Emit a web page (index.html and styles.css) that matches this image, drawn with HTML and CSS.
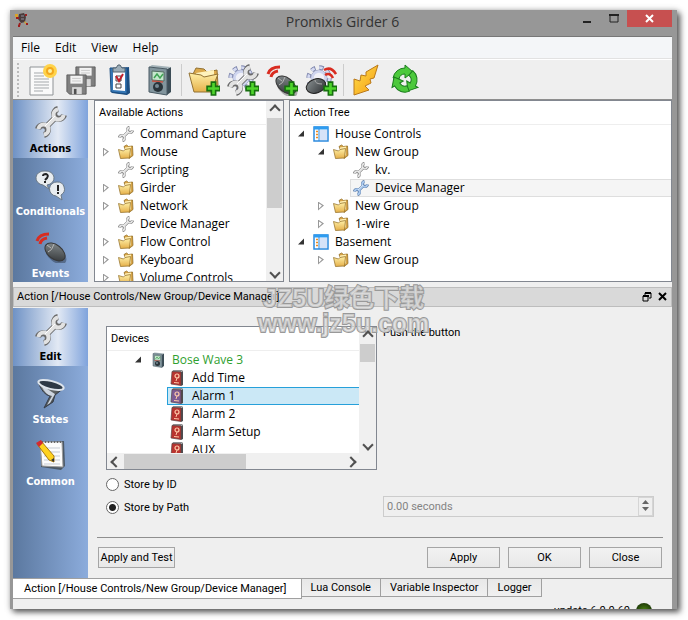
FILE: index.html
```html
<!DOCTYPE html>
<html lang="en">

<head>
    <meta charset="UTF-8">
    <meta name="viewport" content="width=device-width, initial-scale=1.0">
    <title>Promixis Girder 6</title>
    <link rel="stylesheet" href="styles.css">
</head>

<body>

    <!-- Icon sprites -->
    <svg class="sprites" aria-hidden="true">
        <linearGradient id="g-metal" x1="0" y1="0" x2="1" y2="1">
            <stop offset="0" stop-color="#8b9294"/><stop offset="1" stop-color="#2d3032"/>
        </linearGradient>
        <linearGradient id="g-folder" x1="0" y1="0" x2="0" y2="1">
            <stop offset="0" stop-color="#fff0a8"/><stop offset="1" stop-color="#e5b04a"/>
        </linearGradient>
        <linearGradient id="g-bolt" x1="0" y1="0" x2="1" y2="1">
            <stop offset="0" stop-color="#ffe14a"/><stop offset="1" stop-color="#f59a14"/>
        </linearGradient>
        <radialGradient id="g-led">
            <stop offset="0" stop-color="#4f8a14"/><stop offset="1" stop-color="#1f3c08"/>
        </radialGradient>
        <symbol id="wrench" viewBox="0 0 32 32">
            <g class="metal-edge" fill="none" stroke-width="6">
                <path d="M21 11 11 21"/>
                <path d="M23 3A5 5 0 1 0 29 9M3 23A5 5 0 1 1 9 29"/>
            </g>
            <g class="metal" fill="none" stroke-width="4">
                <path d="M21 11 11 21"/>
                <path d="M23 3.500A5 5 0 1 0 28.500 9M3.500 23A5 5 0 1 1 9 28.500"/>
            </g>
            <path d="M20 10 10 20" stroke="#fff" stroke-width="1"/>
        </symbol>
        <symbol id="folder" viewBox="0 0 32 32">
            <path d="M12 5 17 2l4 3 8-1 1 19-8 6z" fill="#d9a548" stroke="#8f6a1e" stroke-width="1.500"/>
            <path d="M14 7l12-2v18H14z" fill="#ffeeb0"/>
            <path d="M1 11l10 3 3-3 11-2-2 19-18 1z" fill="url(#g-folder)" stroke="#94702a" stroke-width="1.500"/>
        </symbol>
        <symbol id="open-folder" viewBox="0 0 32 32">
            <path d="M5 10l3-6 8 1 3 3 10-2 1 15-8 7z" fill="#dba94c" stroke="#927234"/>
            <path d="M8 9l18-3v17H9z" fill="#fff3bd"/>
            <path d="M1 9l12 2 3 2 14-3-7 18H6z" fill="url(#g-folder)" stroke="#927234"/>
        </symbol>
        <symbol id="plus" viewBox="0 0 14 14">
            <path d="M5 1h4v4h4v4H9v4H5V9H1V5h4z" fill="#4fd42c" stroke="#17700f" stroke-width="1.500"/>
        </symbol>
        <symbol id="table" viewBox="0 0 16 16">
            <rect x="1" y="1" width="14" height="14" fill="#fff" stroke="#2c8ade" stroke-width="1.500"/>
            <path d="M1 2h14" stroke="#2e9cf0" stroke-width="3"/>
            <path d="M6 3v12" stroke="#2c8ade"/>
            <rect x="7" y="4" width="7" height="10" fill="#d7e3f8"/>
            <path d="M3 5.500h2M3 8.500h2M3 11.500h2" stroke="#f08a1c" stroke-width="1.500"/>
        </symbol>
        <symbol id="mouse" viewBox="0 0 32 32">
            <ellipse cx="21" cy="24" rx="12" ry="7" transform="rotate(38 21 24)" fill="#000" opacity=".3"/>
            <ellipse cx="20" cy="21" rx="11.500" ry="7" transform="rotate(38 20 21)" fill="url(#g-metal)" stroke="#383838"/>
            <path d="M13 21q4-1 6-8M12 14l4 3" fill="none" stroke="#b8b8b8"/>
            <path d="M2 10Q4 3 14 3M5 13Q6 8 12 7" fill="none" stroke="#d92c20" stroke-width="3"/>
        </symbol>
        <symbol id="gear" viewBox="0 0 32 32">
            <circle cx="16" cy="16" r="12" fill="none" stroke="#7d85ac" stroke-width="5" stroke-dasharray="5 4.400"/>
            <circle cx="16" cy="16" r="12" fill="none" stroke="#d5daf2" stroke-width="3" stroke-dasharray="4 5.400"/>
            <circle cx="16" cy="16" r="9" fill="#f1f1f8" stroke="#858db4" stroke-width="1"/>
            <circle cx="16" cy="16" r="7.500" fill="none" stroke="#cfd5ef" stroke-width="3"/>
        </symbol>
        <symbol id="device" viewBox="0 0 32 32">
            <path d="M24 5l4-2v25l-4 3z" fill="#3c4d56"/>
            <path d="M6 3 9 1l19 2-4 2z" fill="#a3b2b8"/>
            <path d="M6 3l18 2v26L6 28z" fill="#82959d" stroke="#4a5b64"/>
            <path d="M9 7l12 1v9L9 16z" fill="#c5e8cd" stroke="#526d60"/>
            <path d="M11 14l3-4 3 4 3-4" fill="none" stroke="#3fa353" stroke-width="1.500"/>
            <path d="M9 17l11 1" stroke="#c45445" stroke-width="1.500"/>
            <circle cx="15" cy="23" r="5" fill="#29343a"/>
            <circle cx="14" cy="22" r="2" fill="#778b94"/>
        </symbol>
        <symbol id="command" viewBox="0 0 16 16">
            <path d="M11 2l2-1v14l-2 1z" fill="#4d4d50"/>
            <path d="M3 0h10l-2 2H2z" fill="#8d8d90"/>
            <path class="face" d="M2 1.500l9 .5v13.500L1 14z" stroke="#5c4040" stroke-width=".7"/>
            <circle cx="7" cy="6" r="2" fill="none" stroke="#ffc9a8" stroke-width="1.200"/>
            <path d="M7 8l-1 3M4 12.500l5 .5" fill="none" stroke="#ffc9a8"/>
        </symbol>
        <symbol id="floppy" viewBox="0 0 24 24">
            <path d="M1 1h22v22H4l-3-3z" fill="#808080" stroke="#5a5a5a"/>
            <path d="M5 2h14v9H5z" fill="#f2f2f2"/>
            <path d="M7 5h10M7 8h10" stroke="#c4c4c4"/>
            <path d="M7 15h11v8H7z" fill="#d8d8d8"/>
            <path d="M9 17h3v6H9z" fill="#505050"/>
        </symbol>
        <symbol id="cycle-arrow" viewBox="0 0 32 32">
            <path d="M4 14A12 12 0 0 1 16 4V1l8 7-8 6v-4a6 6 0 0 0-6 5z" fill="#4cc93c" stroke="#1b7d1d"/>
        </symbol>
    </svg>

    <div class="window">

        <div class="titlebar">
            <svg class="app-icon" viewBox="0 0 16 16" aria-hidden="true">
                <path d="M5 2l5-1 2 4-1 5-4 1-3-4z" fill="#4a3c3c"/>
                <path d="M1 2h3v3H1zM10 9l3 2-2 1z" fill="#d9a32c"/>
                <path d="M2 6h3M11 3h2M6 11l-1 3M4 14h2M12 12h2" stroke="#9c1e1e" stroke-width="2"/>
                <path d="M7 4h3M7 7h3" stroke="#8e8e9c"/>
            </svg>
            <span class="title">Promixis Girder 6</span>
            <div class="window-buttons">
                <button class="win-btn" aria-label="Minimize"><svg width="10" height="10"><path d="M1 8h8" stroke="#222" stroke-width="2"/></svg></button>
                <button class="win-btn" aria-label="Maximize"><svg width="10" height="10"><path d="M1 1h8v7H1z" fill="none" stroke="#222"/><path d="M0 1h10" stroke="#222" stroke-width="2"/></svg></button>
                <button class="win-btn win-close" aria-label="Close window"><svg width="10" height="10"><path d="M1 1l7 7M8 1 1 8" stroke="#fff" stroke-width="2"/></svg></button>
            </div>
        </div>

        <div class="client">

            <div class="menubar">
                <button>File</button>
                <button>Edit</button>
                <button>View</button>
                <button>Help</button>
            </div>

            <div class="toolbar">
                <span class="grip"></span>
                <button class="tool" aria-label="New">
                    <svg viewBox="0 0 32 32">
                        <path d="M4 3h23v28H4z" fill="#fafafa" stroke="#8f9396"/>
                        <path d="M8 9h10M8 12h10M8 15h15M8 18h15M8 21h15M8 24h15M8 27h9" stroke="#a5a9ac"/>
                        <circle cx="24" cy="7" r="7" fill="#ffd34a"/>
                        <circle cx="24" cy="7" r="3" fill="#fff2a0" stroke="#f3a81c" stroke-width="2"/>
                    </svg>
                </button>
                <button class="tool" aria-label="Save all">
                    <svg viewBox="0 0 32 32">
                        <use href="#floppy" x="10" y="2" width="21" height="21"/>
                        <use href="#floppy" x="1" y="10" width="21" height="21"/>
                    </svg>
                </button>
                <button class="tool" aria-label="Tasks">
                    <svg viewBox="0 0 32 32">
                        <path d="M8 5l17-2 1 26-3 2-15-2z" fill="#1d4f82"/>
                        <path d="M6 4h17v26L7 28z" fill="#3577b5" stroke="#1d4f82"/>
                        <path d="M9 7h12v20l-12-1z" fill="#fcfcff"/>
                        <path d="M9 4h3l2-3h2l2 3h3v4H9z" fill="#9cadb8" stroke="#53636e"/>
                        <path d="M12 12h5v5h-5zM12 20h5v4h-5z" fill="none" stroke="#444"/>
                        <path d="M12 12l3 5 4-7" fill="none" stroke="#c3202c" stroke-width="2"/>
                    </svg>
                </button>
                <button class="tool" aria-label="Devices"><svg viewBox="0 0 32 32"><use href="#device"/></svg></button>
                <span class="divider"></span>
                <button class="tool" aria-label="Add group">
                    <svg viewBox="0 0 32 32"><use href="#open-folder"/><use href="#plus" x="18" y="17" width="15" height="15"/></svg>
                </button>
                <button class="tool" aria-label="Add action">
                    <svg viewBox="0 0 32 32"><use href="#gear" width="28" height="28"/><use href="#wrench"/><use href="#plus" x="18" y="17" width="15" height="15"/></svg>
                </button>
                <button class="tool" aria-label="Add event">
                    <svg viewBox="0 0 32 32"><use href="#mouse"/><use href="#plus" x="18" y="17" width="15" height="15"/></svg>
                </button>
                <button class="tool" aria-label="Add conditional">
                    <svg viewBox="0 0 32 32">
                        <use href="#gear" width="28" height="28"/>
                        <path d="M19 6q7-4 12 4M20 11q5-3 8 3" fill="none" stroke="#d92c20" stroke-width="2.500"/>
                        <ellipse cx="11" cy="22" rx="10" ry="7" transform="rotate(-20 11 22)" fill="url(#g-metal)" stroke="#222"/>
                        <path d="M10 16q0 4 7 4" fill="none" stroke="#aaa"/>
                        <use href="#plus" x="18" y="17" width="15" height="15"/>
                    </svg>
                </button>
                <span class="divider"></span>
                <button class="tool" aria-label="Run">
                    <svg viewBox="0 0 32 32"><path d="M28 1 16 8v4l-5-1-1 6-6-2v16l15-5-4-4 6-3-1-4 4-1z" fill="url(#g-bolt)" stroke="#b9791a"/></svg>
                </button>
                <button class="tool" aria-label="Reload">
                    <svg viewBox="0 0 32 32">
                        <use href="#cycle-arrow" width="32" height="32"/>
                        <use href="#cycle-arrow" width="32" height="32" transform="rotate(120 16 16)"/>
                        <use href="#cycle-arrow" width="32" height="32" transform="rotate(240 16 16)"/>
                    </svg>
                </button>
            </div>

            <div class="upper">
                <div class="sidebar">
                    <button class="side-item active"><svg viewBox="0 0 32 32"><use href="#wrench"/></svg>Actions</button>
                    <button class="side-item">
                        <svg viewBox="0 0 32 32">
                            <path d="M10 2a8 7 0 1 1 2 14l2 4-6-4A8 7 0 0 1 10 2z" fill="#e8ecef" stroke="#6b7986"/>
                            <path d="M22 13a7 7 0 0 1 4 13l1 5-6-4a7 7 0 0 1 1-14z" fill="#e8ecef" stroke="#6b7986"/>
                            <path d="M8 7q0-2 3-2 3 1 1 4l-2 2M10 12v2M23 16v6M23 23v2" fill="none" stroke="#222" stroke-width="2"/>
                        </svg>
                        Conditionals
                    </button>
                    <button class="side-item"><svg viewBox="0 0 32 32"><use href="#mouse"/></svg>Events</button>
                </div>

                <div class="panel available">
                    <div class="panel-main">
                        <h2 class="panel-header">Available Actions</h2>
                        <ul class="tree">
                            <li><span class="twisty none"></span><svg class="icon"><use href="#wrench"/></svg>Command Capture</li>
                            <li><span class="twisty"></span><svg class="icon"><use href="#folder"/></svg>Mouse</li>
                            <li><span class="twisty none"></span><svg class="icon"><use href="#wrench"/></svg>Scripting</li>
                            <li><span class="twisty"></span><svg class="icon"><use href="#folder"/></svg>Girder</li>
                            <li><span class="twisty"></span><svg class="icon"><use href="#folder"/></svg>Network</li>
                            <li><span class="twisty none"></span><svg class="icon"><use href="#wrench"/></svg>Device Manager</li>
                            <li><span class="twisty"></span><svg class="icon"><use href="#folder"/></svg>Flow Control</li>
                            <li><span class="twisty"></span><svg class="icon"><use href="#folder"/></svg>Keyboard</li>
                            <li><span class="twisty"></span><svg class="icon"><use href="#folder"/></svg>Volume Controls</li>
                        </ul>
                    </div>
                    <div class="scroll-v">
                        <button class="arrow up" aria-label="Scroll up"></button>
                        <span class="thumb"></span>
                        <button class="arrow down" aria-label="Scroll down"></button>
                    </div>
                </div>

                <div class="panel action-tree">
                    <div class="panel-main">
                        <h2 class="panel-header">Action Tree</h2>
                        <ul class="tree">
                            <li><span class="twisty open"></span><svg class="icon"><use href="#table"/></svg>House Controls</li>
                            <li class="level-1"><span class="twisty open"></span><svg class="icon"><use href="#folder"/></svg>New Group</li>
                            <li class="level-2"><svg class="icon"><use href="#wrench"/></svg>kv.</li>
                            <li class="level-2 current"><svg class="icon"><use href="#wrench"/></svg>Device Manager</li>
                            <li class="level-1"><span class="twisty"></span><svg class="icon"><use href="#folder"/></svg>New Group</li>
                            <li class="level-1"><span class="twisty"></span><svg class="icon"><use href="#folder"/></svg>1-wire</li>
                            <li><span class="twisty open"></span><svg class="icon"><use href="#table"/></svg>Basement</li>
                            <li class="level-1"><span class="twisty"></span><svg class="icon"><use href="#folder"/></svg>New Group</li>
                        </ul>
                    </div>
                </div>
            </div>

            <div class="dock-title">
                <span>Action [/House Controls/New Group/Device Manager]</span>
                <button aria-label="Float"><svg width="10" height="10"><path d="M3 3V1h6v5H7M1 4h5v5H1z" fill="none" stroke="#000"/><path d="M3 1h6M1 4h6" stroke="#000" stroke-width="2"/></svg></button>
                <button aria-label="Close panel"><svg width="10" height="10"><path d="M1 1l7 7M8 1 1 8" stroke="#000" stroke-width="2"/></svg></button>
                <div class="watermark">JZ5U绿色下载<br>www.jz5u.com</div>
            </div>

            <div class="lower">
                <div class="sidebar">
                    <button class="side-item active"><svg viewBox="0 0 32 32"><use href="#wrench"/></svg>Edit</button>
                    <button class="side-item">
                        <svg viewBox="0 0 32 32">
                            <path d="M3 5q5 13 12 14L9 31l9-6 2-7 9-7z" fill="url(#g-metal)" stroke="#343c48"/>
                            <path d="M6 8q5 11 11 11l-5 9 3-2 5-9z" fill="#cdd5df"/>
                            <ellipse cx="16" cy="8" rx="13" ry="4" transform="rotate(14 16 8)" fill="#2d3946" stroke="#dde4ec" stroke-width="2"/>
                        </svg>
                        States
                    </button>
                    <button class="side-item">
                        <svg viewBox="0 0 32 32">
                            <path d="M6 3l23-1 1 25-4 4-20-3z" fill="#4b5866"/>
                            <path d="M5 3h22l1 25-21-1z" fill="#fcfcfc" stroke="#9b9b9b"/>
                            <path d="M9 9h16M9 13h16M9 17h16M9 21h16M9 25h16" stroke="#c5cbd4"/>
                            <path d="M7 3h20" stroke="#666" stroke-width="2" stroke-dasharray="1 2"/>
                            <path d="M2 5l4-3 13 15v6l-5-2z" fill="#ffd21f" stroke="#a87910"/>
                            <path d="M1 4l5-3 2 3-4 4z" fill="#d22a31"/>
                            <path d="M16 21l3-2v4z" fill="#333"/>
                        </svg>
                        Common
                    </button>
                </div>

                <div class="editor">
                    <div class="editor-form">
                        <div class="panel devices">
                            <div class="devices-body">
                                <div class="panel-main">
                                    <h2 class="panel-header">Devices</h2>
                                    <ul class="tree">
                                        <li class="device"><span class="twisty open"></span><svg class="icon"><use href="#device"/></svg>Bose Wave 3</li>
                                        <li class="command"><svg class="icon"><use href="#command"/></svg>Add Time</li>
                                        <li class="command selected"><svg class="icon"><use href="#command"/></svg>Alarm 1</li>
                                        <li class="command"><svg class="icon"><use href="#command"/></svg>Alarm 2</li>
                                        <li class="command"><svg class="icon"><use href="#command"/></svg>Alarm Setup</li>
                                        <li class="command"><svg class="icon"><use href="#command"/></svg>AUX</li>
                                    </ul>
                                </div>
                                <div class="scroll-v">
                                    <button class="arrow up" aria-label="Scroll up"></button>
                                    <span class="thumb short"></span>
                                    <button class="arrow down" aria-label="Scroll down"></button>
                                </div>
                            </div>
                            <div class="scroll-h">
                                <button class="arrow left" aria-label="Scroll left"></button>
                                <span class="thumb"></span>
                                <button class="arrow right" aria-label="Scroll right"></button>
                            </div>
                        </div>
                        <label class="hint" for="delay">Push the button</label>
                        <div class="radios">
                            <label><input type="radio" name="store">Store by ID</label>
                            <label><input type="radio" name="store" checked>Store by Path</label>
                        </div>
                        <div class="spin">
                            <input type="text" id="delay" value="0.00 seconds" disabled>
                            <div class="spin-buttons">
                                <button aria-label="Increase" disabled></button>
                                <button class="minus" aria-label="Decrease" disabled></button>
                            </div>
                        </div>
                    </div>
                    <div class="editor-footer">
                        <button class="btn btn-test">Apply and Test</button>
                        <button class="btn">Apply</button>
                        <button class="btn">OK</button>
                        <button class="btn">Close</button>
                    </div>
                </div>
            </div>

            <div class="tabs">
                <button class="tab active">Action [/House Controls/New Group/Device Manager]</button>
                <button class="tab">Lua Console</button>
                <button class="tab">Variable Inspector</button>
                <button class="tab">Logger</button>
            </div>

            <div class="statusbar">
                <span>update 6.0.0.60</span>
                <svg width="18" height="18" viewBox="0 0 18 18" aria-hidden="true"><circle cx="9" cy="9" r="8" fill="url(#g-led)"/></svg>
            </div>

        </div>
    </div>

</body>

</html>
```
FILE: styles.css
```css
* {
    box-sizing: border-box;
}

body {
    margin: 0;
    padding: 10px 11px 10px 10px;
    background-color: #fff;
    color: #000;
    font-family: Roboto, "Noto Sans", sans-serif;
    font-size: 11px;
    line-height: 18px;
    --metal: #e2e2e2;
    --metal-edge: #6a6a6a;
    --face: #b8332f;
}

button,
input {
    font: inherit;
    color: inherit;
}

button {
    border: none;
    padding: 0;
    background: none;
}

.sprites {
    display: block;
    width: 0;
    height: 0;
}

.metal {
    stroke: var(--metal);
}

.metal-edge {
    stroke: var(--metal-edge);
}

.face {
    fill: var(--face);
}

.window {
    padding: 0 5px 0 3px;
    background-color: #979797;
    box-shadow: 3px 3px 6px #555, 0 0 6px #ccc;
}

/* Title bar */
.titlebar {
    display: grid;
    grid-template-columns: 1fr auto 1fr;
    height: 27px;
    border-bottom: 1px solid #777;
}

.app-icon {
    width: 16px;
    height: 16px;
    margin: 2px 1px;
}

.title {
    color: #333;
    font-family: "Open Sans", "Noto Sans", sans-serif;
    font-size: 14px;
    line-height: 24px;
}

.window-buttons {
    display: flex;
    justify-content: flex-end;
    align-items: flex-start;
}

.win-btn {
    display: flex;
    align-items: center;
    justify-content: center;
    width: 27px;
    height: 17px;
}

.win-close {
    width: 45px;
    background-color: #c75050;
}

.client {
    background-color: #efefef;
}

/* Menu and toolbar */
.menubar {
    display: flex;
    gap: 15px;
    height: 22px;
    padding: 0 8px;
    background-color: #f4f6f8;
    border-bottom: 1px solid #e2e2e2;
    font-family: "Open Sans", "Noto Sans", sans-serif;
    font-size: 12px;
}

.toolbar {
    display: flex;
    align-items: center;
    gap: 7px;
    height: 41px;
    padding: 0 4px;
    border-top: 1px solid #fff;
    border-bottom: 1px solid #8e8e8e;
}

.grip {
    height: 34px;
    border-left: 2px dotted #bbb;
}

.tool {
    flex: none;
    width: 32px;
    height: 32px;
}

.tool svg {
    display: block;
}

.divider {
    height: 32px;
    margin: 0 -1px;
    border-left: 1px solid #ccc;
}

/* Sidebars */
.sidebar {
    flex: none;
    width: 75px;
    background: linear-gradient(to right, #5b789f, #8cacdc);
}

.side-item {
    display: flex;
    flex-direction: column;
    align-items: center;
    width: 100%;
    height: 62px;
    padding-top: 6px;
    color: #fff;
    font-family: "DejaVu Sans Condensed", "Noto Sans", sans-serif;
    font-size: 11px;
    font-weight: bold;
    line-height: 22px;
}

.side-item svg {
    flex: none;
    width: 32px;
    height: 32px;
}

.side-item.active {
    height: 58px;
    margin-bottom: 5px;
    background: linear-gradient(to right, #6f92c5, #e2e9f4 60%, #7fa3dc);
    color: #000;
}

/* Lists and trees */
.upper {
    display: flex;
    height: 182px;
}

.panel {
    display: flex;
    background-color: #fff;
    border: 1px solid #828790;
    overflow: hidden;
}

.panel-main {
    flex: 1;
    min-width: 0;
    overflow: hidden;
}

.panel-header {
    height: 24px;
    margin: 0;
    padding: 0 4px;
    border-bottom: 1px solid #eee;
    font-size: 11px;
    font-weight: normal;
    line-height: 24px;
}

.available {
    flex: none;
    width: 190px;
    margin-left: 6px;
}

.action-tree {
    flex: 1;
    margin-left: 5px;
}

.tree {
    margin: 0;
    padding: 0;
    list-style: none;
    font-family: "Open Sans", "Noto Sans", sans-serif;
    font-size: 12px;
    line-height: 18px;
    white-space: nowrap;
}

.tree li {
    display: flex;
    align-items: center;
    height: 18px;
    padding-left: 8px;
}

.icon {
    flex: none;
    width: 16px;
    height: 16px;
    margin-right: 6px;
}

.twisty {
    flex: none;
    width: 7px;
    height: 9px;
    margin-right: 8px;
    background-color: #999;
    clip-path: polygon(evenodd, 0 0, 6px 4px, 0 9px, 0 0, 1px 2px, 1px 7px, 4px 4px, 1px 2px);
}

.twisty.open {
    background-color: #333;
    clip-path: polygon(6px 1px, 6px 7px, 0 7px);
}

.twisty.none {
    visibility: hidden;
}

.tree .level-1 {
    padding-left: 28px;
}

.tree .level-2 {
    margin-left: 60px;
    padding-left: 3px;
}

.tree .current {
    --metal: #a9c8ee;
    --metal-edge: #4c6c98;
    background-color: #f5f5f5;
    border: 1px solid #dedede;
    border-right: none;
    padding-left: 2px;
}

/* Scroll bars */
.scroll-v,
.scroll-h {
    display: flex;
    flex: none;
    background-color: #f0f0f0;
}

.scroll-v {
    flex-direction: column;
    width: 17px;
}

.scroll-h {
    height: 16px;
    padding-right: 17px;
}

.thumb {
    background-color: #cdcdcd;
    width: 15px;
    height: 90px;
    align-self: center;
}

.thumb.short {
    height: 18px;
}

.scroll-h .thumb {
    width: 122px;
    height: 15px;
}

.arrow {
    display: flex;
    align-items: center;
    justify-content: center;
    width: 17px;
    height: 17px;
}

.arrow::before {
    content: "";
    width: 6px;
    height: 6px;
    border-top: 2px solid #505050;
    border-left: 2px solid #505050;
    transform: rotate(45deg);
}

.arrow.down {
    margin-top: auto;
}

.arrow.down::before {
    transform: rotate(225deg);
}

.arrow.left::before {
    transform: rotate(-45deg);
}

.arrow.right {
    margin-left: auto;
}

.arrow.right::before {
    transform: rotate(135deg);
}

/* Dock */
.dock-title {
    display: flex;
    align-items: center;
    gap: 6px;
    position: relative;
    height: 20px;
    margin-top: 5px;
    padding: 0 3px;
    background-color: #d9d9d9;
    border: 1px solid #bdbdbd;
}

.dock-title span {
    flex: 1;
}

.dock-title button {
    display: flex;
    width: 10px;
}

.watermark {
    position: absolute;
    left: 244px;
    top: -2px;
    color: rgba(225, 225, 225, 0.7);
    font-family: "Liberation Sans", "Noto Sans CJK SC", sans-serif;
    font-size: 25px;
    font-weight: bold;
    line-height: 25px;
    text-align: center;
    white-space: nowrap;
    -webkit-text-stroke: 2px #999;
    paint-order: stroke fill;
    pointer-events: none;
}

.lower {
    display: flex;
    margin-top: 1px;
}

.editor {
    flex: 1;
}

.editor-form {
    display: grid;
    grid-template-columns: 1fr 1fr;
    gap: 3px 6px;
    padding: 18px 18px 18px;
}

.hint {
    line-height: 14px;
}

.devices {
    flex-direction: column;
    height: 144px;
}

.devices-body {
    display: flex;
    flex: 1;
    min-height: 0;
}

.tree .device {
    padding-left: 28px;
    color: #2fa02f;
}

.tree .command {
    margin-left: 60px;
    padding-left: 3px;
}

.tree .selected {
    --face: #7c5a94;
    background-color: #cbe8f6;
    border: 1px solid #26a0da;
    border-right: none;
    padding-left: 2px;
}

.radios label {
    display: flex;
    align-items: center;
    gap: 5px;
    height: 23px;
}

.radios input {
    appearance: none;
    width: 13px;
    height: 13px;
    margin: 0;
    border: 1px solid #666;
    border-radius: 50%;
    background-color: #fff;
}

.radios input:checked {
    background-image: radial-gradient(circle, #222 3px, transparent 4px);
}

.spin {
    display: flex;
    align-self: end;
    height: 21px;
    margin-bottom: 2px;
    border: 1px solid #ccc;
}

.spin input {
    flex: 1;
    min-width: 0;
    padding: 0 3px;
    border: none;
    background: none;
    color: #838383;
}

.spin-buttons {
    width: 15px;
    padding: 2px 0;
    border: 1px solid #d5d5d5;
}

.spin-buttons button {
    display: block;
    width: 7px;
    height: 4px;
    margin: 0 auto 3px;
    background-color: #666;
    clip-path: polygon(50% 0, 100% 100%, 0 100%);
}

.spin-buttons .minus {
    clip-path: polygon(0 0, 100% 0, 50% 100%);
}

.editor-footer {
    display: flex;
    gap: 8px;
    margin: 0 9px;
    padding: 9px 1px 10px;
    border-top: 1px solid #8f8f8f;
}

.btn {
    width: 73px;
    height: 21px;
    border: 1px solid #a5a5a5;
    background: linear-gradient(#f2f2f2, #e8e8e8);
}

.btn-test {
    width: 77px;
    margin-right: auto;
    white-space: nowrap;
}

/* Bottom tabs */
.tabs {
    display: flex;
    align-items: flex-start;
    height: 21px;
    border-top: 1px solid #a0a0a0;
}

.tab {
    height: 18px;
    padding: 0 9px;
    border: 1px solid #a0a0a0;
    border-top: none;
    border-left: none;
    background: linear-gradient(#e8e8e8, #f0f0f0);
}

.tab.active {
    height: 20px;
    padding: 0 14px 0 11px;
    background: #fff;
}

.statusbar {
    display: flex;
    justify-content: flex-end;
    gap: 5px;
    height: 10px;
    padding: 3px 19px 0 0;
    overflow: hidden;
}
```
